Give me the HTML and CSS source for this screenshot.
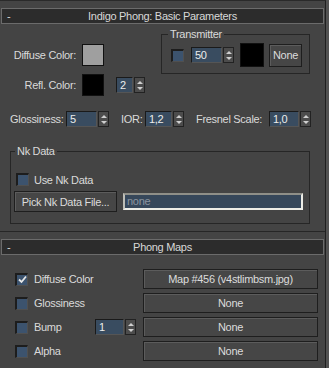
FILE: index.html
```html
<!DOCTYPE html>
<html lang="en">
<head>
  <meta charset="UTF-8" />
  <title>Indigo Phong</title>
  <link rel="stylesheet" href="styles.css">
</head>
<body>
  <div class="window">
    <div class="main">

      <div class="rollout basic">
        <div class="rollout-head"><span class="toggle">-</span><span>Indigo Phong: Basic Parameters</span><span></span></div>

        <div class="row-colors">
          <div class="colors">
            <span class="lbl-r">Diffuse Color:</span><span class="swatch grey"></span><span></span>
            <span class="lbl-r">Refl. Color:</span><span class="swatch black"></span>
            <span class="spinner refl"><span class="field w17">2</span><span class="arrows"></span></span>
          </div>

          <fieldset class="group transmitter">
            <legend>Transmitter</legend>
            <div class="trans-row">
              <span class="check"></span>
              <span class="spinner"><span class="field w31">50</span><span class="arrows"></span></span>
              <span class="swatch black big"></span>
              <button class="btn none-btn">None</button>
            </div>
          </fieldset>
        </div>

        <div class="row-b">
          <span class="lbl gloss">Glossiness:</span>
          <span class="spinner"><span class="field w31">5</span><span class="arrows"></span></span>
          <span class="lbl ior">IOR:</span>
          <span class="spinner"><span class="field w27">1,2</span><span class="arrows"></span></span>
          <span class="lbl fresnel">Fresnel Scale:</span>
          <span class="spinner"><span class="field w30">1,0</span><span class="arrows"></span></span>
        </div>

        <fieldset class="group nk">
          <legend>Nk Data</legend>
          <div class="nk-check"><span class="check"></span><span>Use Nk Data</span></div>
          <div class="nk-file">
            <button class="btn pick-btn">Pick Nk Data File...</button>
            <span class="path">none</span>
          </div>
        </fieldset>
      </div>

      <div class="rollout maps-roll">
        <div class="rollout-head"><span class="toggle">-</span><span>Phong Maps</span><span></span></div>

        <div class="maps">
          <span class="check on"><svg width="9" height="9" viewBox="0 0 9 9"><path d="M1 4.5 3.5 7 8 1.5" fill="none" stroke="#e8e8e8" stroke-width="1.8"/></svg></span>
          <span>Diffuse Color</span>
          <span></span>
          <button class="btn map-btn">Map #456 (v4stlimbsm.jpg)</button>

          <span class="check"></span>
          <span>Glossiness</span>
          <span></span>
          <button class="btn map-btn">None</button>

          <span class="check"></span>
          <span>Bump</span>
          <span class="spinner"><span class="field w29">1</span><span class="arrows"></span></span>
          <button class="btn map-btn">None</button>

          <span class="check"></span>
          <span>Alpha</span>
          <span></span>
          <button class="btn map-btn">None</button>
        </div>
      </div>

    </div>
    <div class="rail"></div>
  </div>
</body>
</html>
```

FILE: styles.css
```css
* { box-sizing: border-box; margin: 0; padding: 0; }

body {
  width: 329px;
  height: 368px;
  overflow: hidden;
  background: #4e4e4e;
  font-family: "Liberation Sans", Arial, sans-serif;
  font-size: 11px;
  letter-spacing: -0.3px;
  color: #dadada;
}

.window {
  display: flex;
  height: 368px;
}

.main {
  width: 326px;
  background: #444;
  border-top: 1px solid #2a2a2a;
  border-right: 1px solid #1f1f1f;
}

.rail {
  flex: 1;
  background: #525252;
}

/* rollouts */

.basic {
  border-bottom: 1px solid #262626;
  padding-bottom: 7px;
}

.rollout-head {
  display: grid;
  grid-template-columns: 1fr auto 1fr;
  align-items: center;
  height: 16px;
  margin: 7px 1px 0 1px;
  border: 1px solid #6b6b6b;
  background: #2c2c2c;
  line-height: 14px;
  color: #d8d8d8;
}

.toggle { padding-left: 5px; }

/* shared controls */

.swatch {
  display: block;
  width: 22px;
  height: 22px;
  border: 1px solid #111;
}

.swatch.grey { background: #9f9f9f; }
.swatch.black { background: #000; }
.swatch.big { width: 24px; height: 24px; margin-left: 6px; }

.spinner {
  display: flex;
  align-items: center;
  gap: 1px;
}

.field {
  display: block;
  height: 16px;
  background: #394c60;
  border: 1px solid #1a1a1a;
  border-right-color: #555;
  border-bottom-color: #555;
  padding-left: 3px;
  line-height: 14px;
  color: #ececec;
}

.w17 { width: 17px; }
.w27 { width: 27px; }
.w29 { width: 29px; }
.w30 { width: 30px; }
.w31 { width: 31px; }

.arrows {
  display: flex;
  flex-direction: column;
  align-items: center;
  justify-content: center;
  gap: 3px;
  width: 11px;
  height: 16px;
  background: #4c4c4c;
  border: 1px solid #222;
}

.arrows::before,
.arrows::after {
  content: "";
  border-left: 3px solid transparent;
  border-right: 3px solid transparent;
}

.arrows::before { border-bottom: 3px solid #cfcfcf; }
.arrows::after { border-top: 3px solid #cfcfcf; }

.check {
  display: flex;
  align-items: center;
  justify-content: center;
  width: 13px;
  height: 13px;
  background: #3c536e;
  border-top: 2px solid #1d1d1d;
  border-left: 2px solid #1d1d1d;
  border-right: 1px solid #505050;
  border-bottom: 1px solid #505050;
}

.btn {
  font: inherit;
  letter-spacing: inherit;
  color: #dcdcdc;
  background: #464646;
  border: 1px solid #1e1e1e;
  box-shadow: inset 1px 1px 0 #5c5c5c;
}

.group {
  border: 1px solid #262626;
}

.group legend {
  padding: 0 2px;
  line-height: 13px;
}

/* basic parameters */

.row-colors {
  display: flex;
  align-items: flex-start;
}

.colors {
  display: grid;
  grid-template-columns: 76px 22px auto;
  column-gap: 6px;
  row-gap: 8px;
  align-items: center;
  margin-top: 20px;
}

.lbl-r { text-align: right; }

.spinner.refl { margin-left: 6px; }

.transmitter {
  width: 148px;
  margin: 4px 15px 0 auto;
  padding: 2px 7px 6px 9px;
}

.transmitter legend { margin-left: -3px; }

.trans-row {
  display: flex;
  align-items: center;
}

.trans-row .check { margin-right: 7px; }

.none-btn {
  width: 33px;
  height: 23px;
  margin-left: 5px;
}

.row-b {
  display: flex;
  align-items: center;
  height: 16px;
  margin-top: 15px;
  padding-left: 10px;
}

.lbl { display: block; }
.gloss { width: 56px; }
.ior { width: 24px; margin-left: 12px; }
.fresnel { width: 73px; margin-left: 12px; }

.nk {
  margin: 18px 15px 0 10px;
  padding: 15px 6px 11px 3px;
}

.nk legend { margin-left: 1px; }

.nk-check {
  display: flex;
  align-items: center;
  gap: 5px;
  height: 13px;
  padding-left: 2px;
}

.nk-file {
  display: flex;
  align-items: center;
  margin-top: 5px;
}

.pick-btn {
  width: 103px;
  height: 21px;
}

.path {
  display: block;
  width: 180px;
  height: 17px;
  margin-left: 6px;
  padding-left: 2px;
  line-height: 13px;
  background: #36475a;
  border: 2px solid #ecece6;
  border-top-color: #8f8f88;
  border-left-color: #bdbdb6;
  color: #8c95a0;
}

/* phong maps */

.maps {
  display: grid;
  grid-template-columns: 19px 61px 48px 175px;
  grid-auto-rows: 20px;
  row-gap: 4px;
  align-items: center;
  margin-top: 14px;
  padding-left: 15px;
}

.map-btn { height: 20px; }
```
